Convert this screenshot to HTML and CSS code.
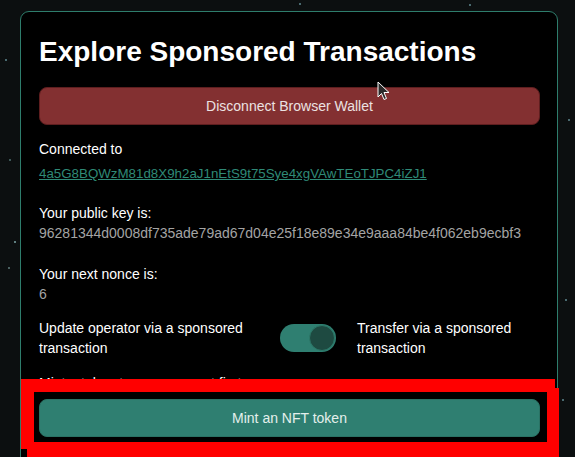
FILE: index.html
```html
<!DOCTYPE html>
<html lang="en">
<head>
<meta charset="utf-8">
<title>Explore Sponsored Transactions</title>
<link rel="stylesheet" href="styles.css">
</head>
<body>
<main class="card">
  <h1 class="title">Explore Sponsored Transactions</h1>
  <button class="btn btn-danger" type="button">Disconnect Browser Wallet</button>
  <div class="label first">Connected to</div>
  <a class="link" href="#">4a5G8BQWzM81d8X9h2aJ1nEtS9t75Sye4xgVAwTEoTJPC4iZJ1</a>
  <div class="field">
    <div class="label">Your public key is:</div>
    <div class="value">96281344d0008df735ade79ad67d04e25f18e89e34e9aaa84be4f062eb9ecbf3</div>
  </div>
  <div class="field nonce">
    <div class="label">Your next nonce is:</div>
    <div class="value">6</div>
  </div>
  <div class="switch-row">
    <div class="label">Update operator via a sponsored transaction</div>
    <div class="toggle"><span class="knob"></span></div>
    <div class="label">Transfer via a sponsored transaction</div>
  </div>
  <div class="label mint-label">Mint a token to your account first:</div>
  <button class="btn btn-primary" type="button">Mint an NFT token</button>
</main>
<svg class="highlight" width="575" height="457" viewBox="0 0 575 457" aria-hidden="true">
  <path fill="#ff0000" fill-rule="evenodd" d="M21 379 H555 V388 H559 V457 H27 V449 H21 Z M34 392 V442 H547 V392 Z"/>
</svg>
<svg class="cursor" width="14" height="20" viewBox="0 0 14 20" aria-hidden="true">
  <path d="M1 1 L1 16 L4.5 12.5 L7 18.5 L9.5 17.5 L7 11.5 L12 11.5 Z" fill="#2a2a2a" stroke="#ffffff" stroke-width="1" stroke-linejoin="round"/>
</svg>
</body>
</html>
```
FILE: styles.css
```css
html, body {
  margin: 0;
  padding: 0;
}
body {
  width: 575px;
  height: 457px;
  overflow: hidden;
  position: relative;
  font-family: "Liberation Sans", Arial, sans-serif;
  font-size: 14px;
  color: #ffffff;
  background-color: #0c0f10;
  background-image:
    radial-gradient(circle at 15px 242px, #5f7f80 0.8px, transparent 1.2px),
    radial-gradient(circle at 9px 268px, #4a6060 0.8px, transparent 1.2px),
    radial-gradient(circle at 6px 60px, #4a6a70 0.8px, transparent 1.2px),
    radial-gradient(circle at 569px 120px, #4a6a70 0.8px, transparent 1.2px),
    radial-gradient(circle at 566px 300px, #4a6a70 0.8px, transparent 1.2px),
    radial-gradient(circle at 300px 4px, #4a6a70 0.8px, transparent 1.2px),
    radial-gradient(circle at 470px 5px, #4a6a70 0.8px, transparent 1.2px),
    radial-gradient(circle at 10px 160px, #3e5858 0.8px, transparent 1.2px),
    radial-gradient(circle at 563px 400px, #4a6a70 0.8px, transparent 1.2px);
  padding-top: 11px;
  padding-left: 20px;
  box-sizing: border-box;
}
.card {
  width: 538px;
  box-sizing: border-box;
  background: #000000;
  border: 1px solid #2e7d6c;
  border-radius: 9px;
  padding: 24px 17px 40px 18px;
}
.title {
  margin: 0 0 19px;
  font-size: 28px;
  font-weight: 700;
  line-height: 32px;
  color: #ffffff;
}
.btn {
  display: block;
  width: 100%;
  box-sizing: border-box;
  font-family: "Liberation Sans", Arial, sans-serif;
  font-size: 14px;
  line-height: 20px;
  border-radius: 8px;
  cursor: pointer;
  padding: 0;
}
.btn-danger {
  height: 38px;
  background: #833031;
  border: 1px solid #5e1e1f;
  color: #ece2e2;
}
.btn-primary {
  height: 38px;
  margin-top: 6px;
  background: #2f7f71;
  border: 1px solid #2a7264;
  color: #e4efec;
}
.label {
  line-height: 20px;
  color: #ffffff;
}
.label.first {
  margin-top: 14px;
}
.link {
  display: block;
  margin-top: 5px;
  font-size: 13.33px;
  line-height: 20px;
  color: #2f8a77;
  text-decoration: underline;
}
.field {
  margin-top: 19px;
}
.field.nonce {
  margin-top: 21px;
}
.value {
  line-height: 20px;
  color: #a4a4a4;
}
.switch-row {
  margin-top: 14px;
  display: grid;
  grid-template-columns: 220px 56px 1fr;
  column-gap: 21px;
  align-items: center;
}
.toggle {
  width: 56px;
  height: 28px;
  box-sizing: border-box;
  border-radius: 14px;
  background: #2f7f71;
  display: flex;
  justify-content: flex-end;
  align-items: center;
  padding-right: 1px;
}
.knob {
  width: 26px;
  height: 26px;
  box-sizing: border-box;
  border-radius: 50%;
  background: #1e4a41;
  border: 1px solid #2c7868;
}
.mint-label {
  margin-top: 15px;
}
.highlight {
  position: absolute;
  left: 0;
  top: 0;
  pointer-events: none;
}
.cursor {
  position: absolute;
  left: 377px;
  top: 81px;
  pointer-events: none;
}
```
